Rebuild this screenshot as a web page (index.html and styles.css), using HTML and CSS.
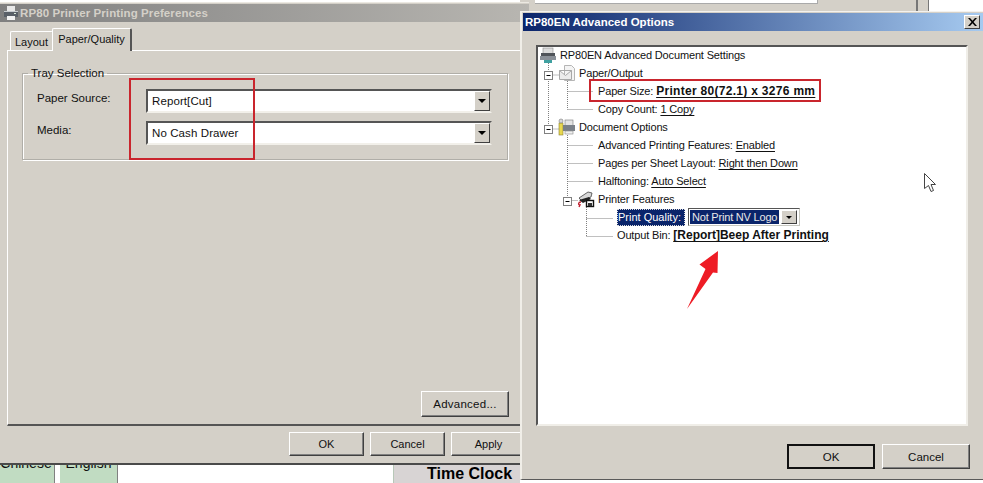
FILE: index.html
```html
<!DOCTYPE html>
<html lang="en">
<head>
<meta charset="utf-8">
<title>RP80 Printer Preferences</title>
<link rel="stylesheet" href="styles.css">
</head>
<body>
<div class="desktop">
  <div class="back-top">
    <div class="back-white"></div>
    <div class="back-gap"></div>
    <div class="back-rest"></div>
  </div>
  <div class="back-bottom">
    <div class="lang-btn lang-a">Chinese</div>
    <div class="lang-btn lang-b">English</div>
    <div class="clock">Time Clock</div>
  </div>

  <section class="window win-prefs">
    <header class="title title-inactive">
      <svg class="title-icon" width="16" height="16" viewBox="0 0 16 16"><rect x="4" y="1" width="8" height="5" fill="#e8e8e8"/><rect x="1" y="6" width="14" height="6" fill="#5a6068"/><rect x="1" y="6" width="14" height="1" fill="#c8ccd0"/><rect x="4" y="11" width="8" height="4" fill="#f2f2f2"/><rect x="11" y="8" width="2" height="1" fill="#d8e8d8"/></svg>
      <span>RP80 Printer Printing Preferences</span>
    </header>
    <nav class="tabs">
      <div class="tab">Layout</div>
      <div class="tab tab-on">Paper/Quality</div>
    </nav>
    <div class="panel">
      <fieldset class="group">
        <legend>Tray Selection</legend>
        <div class="field">
          <label class="field-label">Paper Source:</label>
          <div class="combo"><span>Report[Cut]</span><i class="drop"><b></b></i></div>
        </div>
        <div class="field">
          <label class="field-label">Media:</label>
          <div class="combo"><span>No Cash Drawer</span><i class="drop"><b></b></i></div>
        </div>
      </fieldset>
      <div class="panel-foot"><button class="btn btn-adv">Advanced...</button></div>
    </div>
    <footer class="actions">
      <button class="btn btn-act">OK</button>
      <button class="btn btn-act">Cancel</button>
      <button class="btn btn-act">Apply</button>
    </footer>
    <div class="redbox red-source"></div>
  </section>

  <section class="window win-adv">
    <header class="title title-active">
      <span>RP80EN Advanced Options</span>
      <button class="close">
        <svg width="9" height="8" viewBox="0 0 9 8"><path d="M0 0h2l2.500 2.800L7 0h2L5.500 4 9 8H7L4.500 5.200 2 8H0l3.500-4z" fill="#000"/></svg>
      </button>
    </header>
    <div class="tree">
      <svg class="tree-lines" width="120" height="240" viewBox="0 0 120 240">
        <g fill="none" stroke="#808080" stroke-dasharray="1 1">
          <path d="M12.500 16V78M16.500 28H23"/>
          <path d="M16.500 82H23"/>
          <path d="M31.500 34V62.500M31.500 44.500H57M31.500 62.500H57"/>
          <path d="M31.500 88V150M31.500 98.500H57M31.500 116.500H57M31.500 134.500H57M36.500 153.500H42"/>
          <path d="M50.500 160V189.500M50.500 171.500H77M50.500 189.500H77"/>
        </g>
        <g fill="#fff" stroke="#808080">
          <rect x="8.500" y="24.500" width="8" height="8"/>
          <rect x="8.500" y="78.500" width="8" height="8"/>
          <rect x="27.500" y="150.500" width="8" height="8"/>
        </g>
        <path d="M10.500 28.500h4M10.500 82.500h4M29.500 154.500h4" stroke="#000"/>
        <g>
          <rect x="7" y="1" width="10" height="6" fill="#dcdcdc" stroke="#8a8a8a" stroke-width=".6"/>
          <rect x="5" y="6" width="14" height="4" fill="#50545a"/>
          <rect x="4" y="9" width="16" height="4" fill="#8a9098"/>
          <rect x="8" y="13" width="8" height="3" fill="#3fa0a0"/>
        </g>
        <g>
          <path d="M28.500 18.500h7l3 3v12h-10z" fill="#f4f4f4" stroke="#b5b5b5"/>
          <path d="M23.500 23.500h12v9h-12zM23.500 23.500l6 5 6-5" fill="#ececec" stroke="#a8a8a8"/>
        </g>
        <g>
          <rect x="23" y="76" width="4" height="12" fill="#e8d850" stroke="#8a8030" stroke-width=".6"/>
          <circle cx="25" cy="74" r="2" fill="#d8d8d8" stroke="#777" stroke-width=".6"/>
          <rect x="29" y="73" width="8" height="6" fill="#e4e4e4" stroke="#777" stroke-width=".6"/>
          <rect x="27" y="78" width="12" height="6" fill="#7a8088"/>
          <rect x="29" y="84" width="8" height="3" fill="#f0f0f0" stroke="#888" stroke-width=".6"/>
        </g>
        <g>
          <path d="M43 151l9-6 4 1-1 4-9 4z" fill="#d8d8d8" stroke="#444" stroke-width=".8"/>
          <path d="M43 153l10-3 2 2-8 4z" fill="#222"/>
          <path d="M45 155c-3 0-3 3-1 3l-1 2" fill="none" stroke="#c02030" stroke-width="1.400"/>
          <rect x="50.500" y="153.500" width="7" height="6" fill="#fff" stroke="#111" stroke-width="1.400"/>
          <rect x="52" y="156" width="4" height="3" fill="#333"/>
        </g>
      </svg>
      <div class="row row-0">RP80EN Advanced Document Settings</div>
      <div class="row row-1">Paper/Output</div>
      <div class="row row-2">Paper Size: <u class="strong strong-wide">Printer 80(72.1) x 3276 mm</u></div>
      <div class="row row-2">Copy Count: <u>1 Copy</u></div>
      <div class="row row-1">Document Options</div>
      <div class="row row-2">Advanced Printing Features: <u>Enabled</u></div>
      <div class="row row-2">Pages per Sheet Layout: <u>Right then Down</u></div>
      <div class="row row-2">Halftoning: <u>Auto Select</u></div>
      <div class="row row-2">Printer Features</div>
      <div class="row row-3 row-sel">
        <span class="sel">Print Quality:</span>
        <span class="mini-combo"><span class="mini-val">Not Print NV Logo</span><i class="drop drop-mini"><b></b></i></span>
      </div>
      <div class="row row-3">Output Bin: <u class="strong">[Report]Beep After Printing</u></div>
      <div class="redbox red-size"></div>
      <svg class="arrow" width="34" height="60" viewBox="0 0 34 60"><path d="M32 1L13.500 14.500l6 4.500L1 59l26-36.500 4.500.5z" fill="#ee1c25"/></svg>
      <svg class="cursor" width="14" height="21" viewBox="0 0 14 21"><path d="M1.500 1.500v15l4-3 2.500 6 2.500-1-2.500-6h4.500z" fill="#fff" stroke="#444"/></svg>
    </div>
    <footer class="adv-actions">
      <button class="btn btn-big btn-default">OK</button>
      <button class="btn btn-big">Cancel</button>
    </footer>
  </section>
</div>
</body>
</html>
```
FILE: styles.css
```css
* { box-sizing: border-box; }
html, body { margin: 0; padding: 0; }
body { width: 983px; height: 483px; overflow: hidden; background: #fff; font-family: "Liberation Sans", Arial, sans-serif; font-size: 11.500px; color: #111; }
.desktop { position: relative; width: 983px; height: 483px; overflow: hidden; }

.back-top { position: absolute; left: 520px; top: 0; right: 0; height: 14px; display: flex; background: #d4d0c8; }
.back-white { width: 283px; margin-left: 15px; height: 4px; background: #fff; border-right: 1px solid #aaa; border-bottom: 1px solid #aaa; }
.back-gap { width: 51px; margin-left: 49px; border-right: 2px solid #777; }
.back-rest { flex: 1; margin-left: 10px; background: #fff; border-left: 1px solid #777; }

.back-bottom { position: absolute; left: 0; bottom: 0; width: 983px; height: 40px; background: #fff; }
.lang-btn { position: absolute; top: -1px; height: 41px; display: flex; align-items: center; justify-content: center; background: #c1dcc2; border-right: 1px solid #808080; font-size: 14px; color: #111; }
.lang-a { left: -2px; width: 57px; }
.lang-b { left: 60px; width: 58px; }
.clock { position: absolute; left: 393px; top: 0; width: 127px; height: 40px; padding: 21px 0 0 33px; background: #d8d4d4; border-left: 1px solid #b8c8b8; font-weight: 700; font-size: 16px; line-height: 19px; color: #000; white-space: nowrap; }

.window { position: absolute; background: #d4d0c8; display: flex; flex-direction: column; }
.win-prefs { left: -1px; top: 2px; width: 530px; height: 463px; border-top: 1px solid #ece9e2; border-bottom: 2px solid #4a4a4a; }
.win-adv { left: 520px; top: 11px; width: 463px; height: 469px; border-top: 1px solid #f4f2ee; border-left: 2px solid #f0eee8; border-bottom: 1px solid #5a5a5a; }

.title { flex: none; display: flex; align-items: center; height: 18px; margin: 1px 0 0 1px; font-weight: 700; font-size: 11.500px; white-space: nowrap; }
.title-inactive { background: linear-gradient(90deg, #808080, #b8b6b1); color: #d4d0c8; padding-left: 3px; letter-spacing: .1px; }
.title-inactive span { margin-left: 1px; }
.title-icon { flex: none; }
.title-active { background: linear-gradient(90deg, #0a246a, #a6caf0); color: #fff; padding: 0 3px 0 2px; justify-content: space-between; }
.close { width: 16px; height: 14px; padding: 0; display: flex; align-items: center; justify-content: center; background: #d4d0c8; border: 1px solid; border-color: #fff #404040 #404040 #fff; }

.tabs { flex: none; display: flex; align-items: flex-end; height: 28px; padding-left: 11px; }
.tab { width: 43px; height: 19px; text-align: center; font-size: 11px; line-height: 20px; background: #d4d0c8; border: 1px solid #fff; border-bottom: 0; border-right: 1px solid #808080; border-radius: 2px 2px 0 0; }
.tab-on { width: 80px; height: 23px; line-height: 20px; margin-left: -1px; margin-bottom: -1px; position: relative; z-index: 1; border-right: 2px solid #555; }

.panel { flex: none; margin-left: 8px; height: 376px; display: flex; flex-direction: column; padding: 14px 0 0 14px; background: #d4d0c8; border-top: 1px solid #fff; border-left: 1px solid #fff; border-bottom: 2px solid #555; }
.group { flex: none; width: 486px; height: 95px; margin: 0; padding: 0 14px; border: 1px solid #b0aea8; box-shadow: inset 1px 1px 0 #fff, 1px 1px 0 #fff; }
.group legend { padding: 0 3px; margin-left: -9px; line-height: 16px; }
.field { display: flex; align-items: center; height: 24px; margin-bottom: 8px; }
.field:first-of-type { margin-top: 8px; }
.field .field-label { width: 109px; margin-top: -6px; }
.combo { flex: none; width: 346px; height: 24px; display: flex; align-items: center; justify-content: space-between; padding-left: 4px; background: #fff; border: 2px solid; border-color: #555 #d4d0c8 #f2f0ea #555; letter-spacing: .1px; }
.drop { flex: none; width: 16px; height: 20px; display: flex; align-items: center; justify-content: center; background: #d4d0c8; border: 1px solid; border-color: #fff #404040 #404040 #fff; }
.drop b { width: 0; height: 0; border: 4px solid transparent; border-top-color: #000; border-bottom: 0; }

.panel-foot { margin-top: auto; width: 487px; height: 33px; display: flex; justify-content: flex-end; }
.btn { font: inherit; color: #111; padding: 0; background: #d4d0c8; border: 1px solid; border-color: #fff #404040 #404040 #fff; box-shadow: inset -1px -1px 0 #808080; }
.btn-adv { width: 88px; height: 26px; letter-spacing: .25px; }
.actions { flex: none; display: flex; gap: 6px; padding: 6px 0 0 290px; }
.btn-act { width: 75px; height: 24px; font-size: 11px; }

.redbox { position: absolute; pointer-events: none; border: 2px solid #c9252d; }
.red-source { left: 130px; top: 75px; width: 126px; height: 82px; }

.tree { position: relative; flex: none; height: 381px; width: 432px; margin: 14px 0 0 14px; background: #fff; border: 2px solid; border-color: #555 #f0eee8 #f0eee8 #555; }
.tree-lines { position: absolute; left: -2px; top: 0; }
.row { position: relative; height: 18px; line-height: 18px; white-space: nowrap; font-size: 11px; letter-spacing: -.15px; }
.row u { text-underline-offset: 2px; }
.row-0 { padding-left: 22px; margin-top: -1px; }
.row-1 { padding-left: 41px; }
.row-2 { padding-left: 60px; }
.row-3 { padding-left: 79px; }
.row-sel { display: flex; align-items: flex-start; gap: 3px; letter-spacing: 0; }
.strong { font-weight: 700; font-size: 12px; letter-spacing: 0; }
.strong-wide { letter-spacing: .3px; }
.sel { flex: none; width: 68px; height: 17px; margin-top: 1px; line-height: 16px; padding-left: 1px; background: #0a246a; color: #fff; outline: 1px dotted #ddd; outline-offset: -1px; }
.mini-combo { flex: none; display: flex; align-items: center; width: 112px; height: 18px; padding: 1px; background: #fff; border: 1px solid #555; border-right-color: #c8c8c0; border-bottom-color: #c8c8c0; }
.mini-val { width: 89px; height: 14px; line-height: 14px; padding-left: 2px; background: #0a246a; color: #e8e8e8; white-space: nowrap; letter-spacing: -.2px; }
.drop-mini { width: 16px; height: 14px; margin-left: 2px; }
.drop-mini b { border-width: 3.500px; border-bottom: 0; }
.red-size { left: 51px; top: 32px; width: 232px; height: 23px; }
.arrow { position: absolute; left: 148px; top: 203px; }
.cursor { position: absolute; left: 385px; top: 125px; }

.adv-actions { flex: none; display: flex; gap: 7px; padding: 18px 0 0 265px; }
.btn-big { width: 88px; height: 25px; }
.btn-default { border: 2px solid #111; box-shadow: none; }
```
